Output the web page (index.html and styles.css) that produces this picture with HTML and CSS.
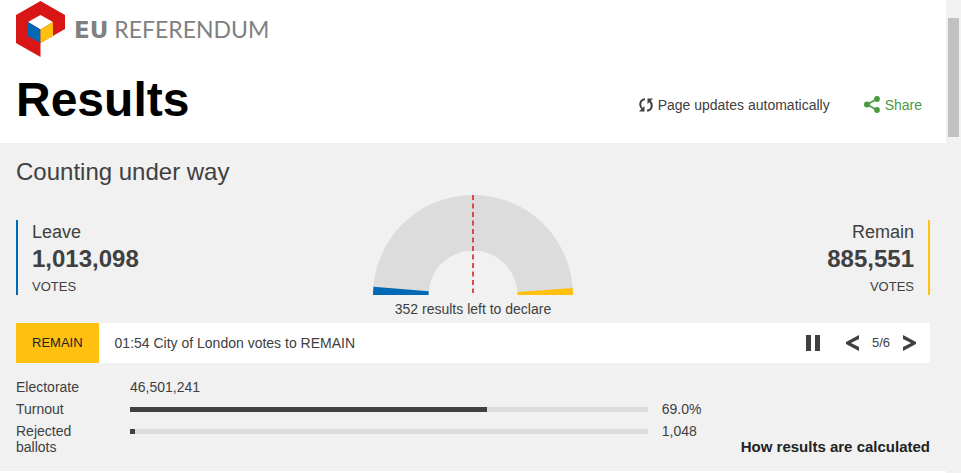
FILE: index.html
```html
<!DOCTYPE html>
<html lang="en">
<head>
<meta charset="utf-8">
<meta name="viewport" content="width=device-width, initial-scale=1">
<title>EU Referendum Results</title>
<link rel="stylesheet" href="styles.css">
</head>
<body>
<div class="window">
<div class="page">
  <header class="masthead">
    <div class="brand">
      <svg class="brand-mark" width="50" height="56" viewBox="0 0 50 56" aria-hidden="true">
        <path fill="#d91616" d="M24.500 0 49 14V28L24.500 42V56L0 42V14Z"/>
        <path fill="#fff" d="M24.500 14 37 21 24.500 28.500 12 21Z"/>
        <path fill="#0068b4" d="M12 21 24.500 28.500V42L12 35Z"/>
        <path fill="#ffc010" d="M37 21 24.500 28.500V42L37 35Z"/>
      </svg>
      <span class="brand-name"><strong>EU</strong> REFERENDUM</span>
    </div>
    <div class="title-row">
      <h1>Results</h1>
      <div class="page-tools">
        <span class="updates">
          <svg width="14" height="14" viewBox="0 0 14 14" fill="none" stroke="#404040" stroke-width="2" aria-hidden="true">
            <path d="M6 1.300C.5 1.800 0 8 3.500 11"/><path d="M8 12.700C13.500 12 14 6 10.500 3"/>
            <path fill="#404040" stroke="none" d="M5.500 8V13.500H0L2 11.500ZM8.500 6V.5H14L12 2.500Z"/>
          </svg>
          Page updates automatically
        </span>
        <button class="share" type="button">
          <svg width="16" height="17" viewBox="0 0 16 17" aria-hidden="true">
            <path d="M13 3 3 8.500 13 14" fill="none" stroke="#4a9a3f" stroke-width="1.600"/>
            <g fill="#4a9a3f"><circle cx="13" cy="3" r="2.900"/><circle cx="3" cy="8.500" r="3"/><circle cx="13" cy="14" r="2.900"/></g>
          </svg>
          Share
        </button>
      </div>
    </div>
  </header>
  <main class="results">
    <h2>Counting under way</h2>
    <section class="tally">
      <div class="side side-leave">
        <span class="side-name">Leave</span>
        <strong class="side-count">1,013,098</strong>
        <span class="side-unit">VOTES</span>
      </div>
      <figure class="gauge">
        <svg width="200" height="100" viewBox="0 0 200 100" aria-hidden="true">
          <path fill="#dcdcdc" d="M0 100A100 100 0 0 1 200 100H144.500A44.500 44.500 0 0 0 55.500 100Z"/>
          <path fill="#0068b4" d="M0 100 .4 91.700 55.700 96.300 55.500 100Z"/>
          <path fill="#ffc010" d="M200 100 199.700 93 144.400 96.900 144.500 100Z"/>
          <path d="M100 0V98" stroke="#d94a4a" stroke-width="2" stroke-dasharray="5 3.500"/>
        </svg>
        <figcaption>352 results left to declare</figcaption>
      </figure>
      <div class="side side-remain">
        <span class="side-name">Remain</span>
        <strong class="side-count">885,551</strong>
        <span class="side-unit">VOTES</span>
      </div>
    </section>
    <section class="ticker">
      <span class="ticker-tag">REMAIN</span>
      <p class="ticker-text">01:54 City of London votes to REMAIN</p>
      <div class="ticker-controls">
        <button class="pause" type="button" aria-label="Pause"><svg width="14" height="16" viewBox="0 0 14 16"><path fill="#404040" d="M0 0H5V16H0ZM9 0H14V16H9Z"/></svg></button>
        <button type="button" aria-label="Previous"><svg width="14" height="16" viewBox="0 0 14 16"><path fill="#404040" d="M13 0V4L5 8 13 12V16L0 9V7Z"/></svg></button>
        <span class="ticker-count">5/6</span>
        <button type="button" aria-label="Next"><svg width="14" height="16" viewBox="0 0 14 16"><path fill="#404040" d="M1 0V4L9 8 1 12V16L14 9V7Z"/></svg></button>
      </div>
    </section>
    <section class="details">
      <dl class="stats">
        <div class="stat"><dt>Electorate</dt><dd>46,501,241</dd></div>
        <div class="stat"><dt>Turnout</dt><dd><span class="bar"><span class="bar-fill" style="width:69%"></span></span><span class="figure">69.0%</span></dd></div>
        <div class="stat"><dt>Rejected ballots</dt><dd><span class="bar"><span class="bar-fill" style="width:1%"></span></span><span class="figure">1,048</span></dd></div>
      </dl>
      <a class="how" href="#">How results are calculated</a>
    </section>
  </main>
</div>
<div class="scroll-track" aria-hidden="true"><div class="scroll-thumb"></div></div>
</div>
</body>
</html>
```
FILE: styles.css
```css
* { box-sizing: border-box; }
body {
  margin: 0;
  background: #fff;
  color: #404040;
  font: 14px/16px "Liberation Sans", Arial, sans-serif;
}
h1, h2, p, dl, dd, figure { margin: 0; }
svg { display: block; }
button {
  padding: 0;
  border: 0;
  background: none;
  color: inherit;
  font: inherit;
  cursor: pointer;
}
.window { display: flex; min-height: 100vh; }
.page { flex: 1; min-width: 0; }
.scroll-track { width: 15px; padding: 18px 2px; background: #f1f1f1; }
.scroll-thumb { height: 119px; background: #c1c1c1; }

.masthead { padding: 1px 16px 15px; }
.brand { display: flex; align-items: center; gap: 8px; }
.brand-name {
  color: #808080;
  font: 23px/28px Lato, sans-serif;
}
.brand-name strong { font: 700 23px/28px "DejaVu Sans", sans-serif; }
.title-row {
  display: flex;
  justify-content: space-between;
  align-items: center;
  margin-top: 15px;
}
h1 { color: #000; font-size: 48px; line-height: 56px; }
.page-tools { display: flex; align-items: center; gap: 34px; margin: 9px 8px 0 0; }
.updates, .share { display: flex; align-items: center; gap: 5px; }
.share { color: #4a9a3f; }

.results { padding: 16px 16px 16px; background: #f1f1f1; }
h2 { font-size: 24px; line-height: 26px; font-weight: 400; }
.tally {
  display: grid;
  grid-template-columns: 1fr auto 1fr;
  margin-top: 10px;
}
.side {
  display: flex;
  flex-direction: column;
  height: 75px;
  margin-top: 25px;
  padding: 0 14px;
}
.side-leave { border-left: 2px solid #0068b4; }
.side-remain { border-right: 2px solid #ffc010; text-align: right; }
.side-name { font-size: 18px; line-height: 24px; }
.side-count { font-size: 24px; line-height: 30px; }
.side-unit { margin-top: 5px; font-size: 13px; }
.gauge { display: flex; flex-direction: column; align-items: center; }
.gauge figcaption { margin-top: 6px; }

.ticker {
  display: flex;
  align-items: center;
  height: 40px;
  margin-top: 6px;
  background: #fff;
}
.ticker-tag {
  align-self: stretch;
  padding: 0 16px;
  background: #ffc010;
  font-size: 13px;
  line-height: 40px;
  color: #222;
}
.ticker-text { flex: 1; padding-left: 16px; }
.ticker-controls { display: flex; align-items: center; gap: 12px; padding-right: 14px; }
.ticker-count { font-size: 13px; }
.pause { margin-right: 14px; }

.details { display: flex; align-items: flex-end; margin-top: 16px; }
.stats { display: flex; flex: 1; flex-direction: column; gap: 6px; }
.stat { display: flex; }
.stat dt { width: 98px; margin-right: 16px; padding-right: 24px; }
.stat dd { display: flex; flex: 1; gap: 14px; height: 16px; align-items: center; }
.bar { flex: 1; height: 5px; background: #dcdcdc; }
.bar-fill { display: block; height: 5px; background: #404040; }
.figure { width: 79px; }
.how { color: #222; font-size: 15px; font-weight: 700; text-decoration: none; }
```
